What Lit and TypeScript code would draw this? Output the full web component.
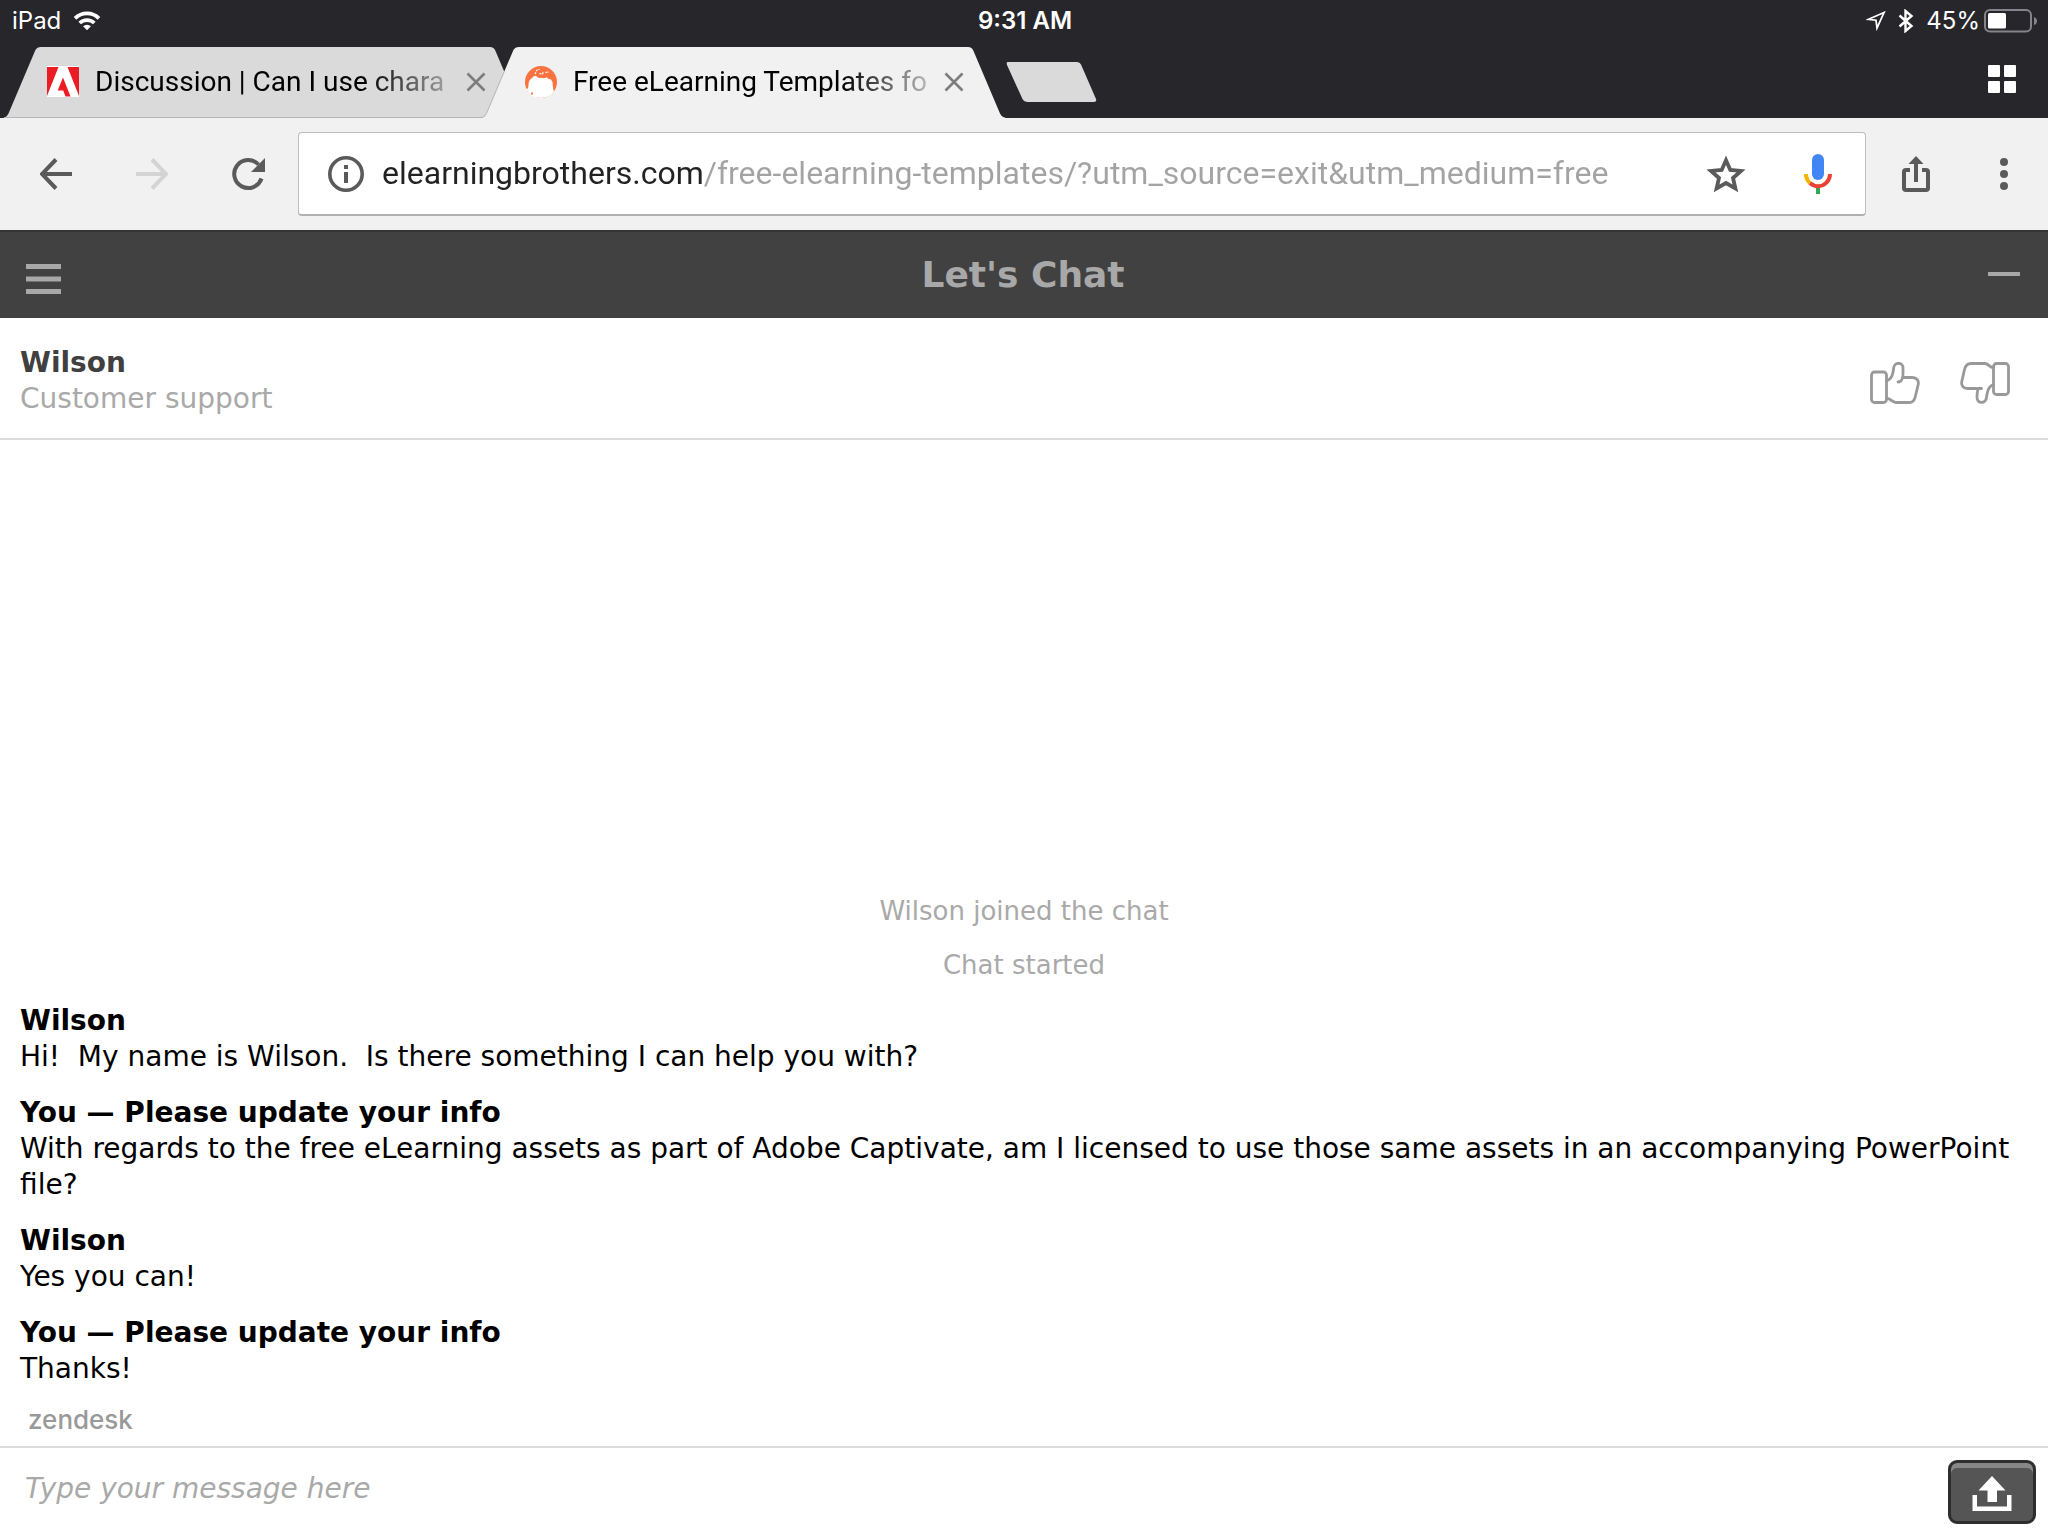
import { LitElement, html, css, svg } from "lit";
import { customElement, property } from "lit/decorators.js";
import { classMap } from "lit/directives/class-map.js";

const wifiIcon = svg`<svg width="28" height="22" viewBox="0 0 30 22" aria-hidden="true">
  <g fill="none" stroke="#fff" stroke-width="4">
    <path d="M2.200 8.200a18 18 0 0 1 25.600 0"/>
    <path d="M7.200 13.200a11 11 0 0 1 15.600 0"/>
  </g>
  <path d="M15 21l-4.200-4.400a6 6 0 0 1 8.400 0z" fill="#fff"/></svg>`;

const locationIcon = svg`<svg width="20" height="20" viewBox="0 0 20 20" aria-hidden="true">
  <path d="M18 1.500L2.500 8.300l7.500.9 1 7.800z" fill="none" stroke="#fff" stroke-width="1.800" stroke-linejoin="miter"/></svg>`;

const bluetoothIcon = svg`<svg width="16" height="24" viewBox="0 0 16 24" aria-hidden="true">
  <path d="M1.500 6.500l12 10.500-6 5V2l6 5L1.500 17.500" fill="none" stroke="#fff" stroke-width="2.400"/></svg>`;

const batteryIcon = svg`<svg width="54" height="24" viewBox="0 0 54 24" aria-hidden="true">
  <rect x="1" y="1" width="46" height="21.500" rx="5" fill="none" stroke="#84848a" stroke-width="2"/>
  <rect x="4" y="4" width="18" height="15.500" rx="1.500" fill="#fff"/>
  <path d="M50 8q3 1 3 4t-3 4z" fill="#84848a"/></svg>`;

const adobeIcon = svg`<svg width="32" height="32" viewBox="0 0 32 32" aria-hidden="true">
  <rect width="32" height="31" fill="#fff"/>
  <path d="M0 1h11.500L0 30zM20.500 1H32v29zM16 11.500L23.500 30.500h-5l-2.300-6h-5.500z" fill="#ec1c24"/></svg>`;

const brothersIcon = svg`<svg width="32" height="32" viewBox="0 0 32 32" aria-hidden="true">
  <circle cx="16" cy="16" r="16" fill="#f97340"/>
  <path d="M1.500 23q2 0 2-4 0-5 3-6.500 1.500-2.500 4.500-2.800 2 3 5.500 2 2.500 1.200 5-.5 1.500 2 4.500 2.300 2 2 1.700 5.500.3 4 1.300 6.500Q24.500 32 16 32 5.500 32 1.500 23z" fill="#fff"/>
  <path d="M6 27.500h2" stroke="#f97340" stroke-width="2"/>
  <path d="M10 8l2-4 2.500-.8M14.500 7.500l3 .5 1-2.500M20.500 6.500l3.500-.5" fill="none" stroke="#fff" stroke-width="1.200" stroke-dasharray="2 1"/></svg>`;

const closeIcon = svg`<svg width="20" height="20" viewBox="0 0 20 20" aria-hidden="true">
  <path d="M1.500 1.500l17 17M18.500 1.500l-17 17" stroke="#7d7d7d" stroke-width="2.600" fill="none"/></svg>`;

const tabsIcon = svg`<svg width="28" height="28" viewBox="0 0 28 28" fill="#fff" aria-hidden="true">
  <rect width="12" height="12" rx="1"/><rect x="16" width="12" height="12" rx="1"/>
  <rect y="16" width="12" height="12" rx="1"/><rect x="16" y="16" width="12" height="12" rx="1"/></svg>`;

const backIcon = svg`<svg width="32" height="32" viewBox="0 0 32 32" aria-hidden="true">
  <path d="M16 1.500L2 16l14 14.500M2.500 16H32" fill="none" stroke="#5a5a5a" stroke-width="4"/></svg>`;

const forwardIcon = svg`<svg width="32" height="32" viewBox="0 0 32 32" aria-hidden="true">
  <path d="M16 1.500L30 16 16 30.500M29.500 16H0" fill="none" stroke="#d4d4d4" stroke-width="4"/></svg>`;

const reloadIcon = svg`<svg width="34" height="34" viewBox="0 0 34 34" aria-hidden="true">
  <path d="M29.500 21.500A14 14 0 1 1 26.500 7.500" fill="none" stroke="#5a5a5a" stroke-width="4"/>
  <path d="M33 1v14H19z" fill="#5a5a5a"/></svg>`;

const infoIcon = svg`<svg width="36" height="36" viewBox="0 0 36 36" aria-hidden="true">
  <circle cx="18" cy="18" r="16.200" fill="none" stroke="#5a5a5a" stroke-width="3.600"/>
  <path d="M16 9h4v4h-4zM16 16h4v11h-4z" fill="#5a5a5a"/></svg>`;

const starIcon = svg`<svg width="40" height="38" viewBox="0 0 40 38" aria-hidden="true">
  <path d="M20 5.200l4.300 9.700 10.700 1-8 7.100 2.400 10.500-9.400-5.500-9.400 5.500L13 23l-8-7.100 10.700-1z" fill="none" stroke="#5a5a5a" stroke-width="3.800"/></svg>`;

const micIcon = svg`<svg width="28" height="40" viewBox="0 0 28 40" aria-hidden="true">
  <rect x="8" y="0" width="12" height="26" rx="6" fill="#4285f4"/>
  <path d="M12 33h4v7h-4z" fill="#34a853"/>
  <path d="M2 20q0 5.500 4 9" fill="none" stroke="#f4b400" stroke-width="4"/>
  <path d="M6 29q3.500 3.200 8 3.200 5 0 8.500-3.700Q26 25 26 20" fill="none" stroke="#ea4335" stroke-width="4"/></svg>`;

const shareIcon = svg`<svg width="28" height="36" viewBox="0 0 28 36" aria-hidden="true">
  <path d="M8 14H4q-2 0-2 2v16q0 2 2 2h20q2 0 2-2V16q0-2-2-2h-4" fill="none" stroke="#5a5a5a" stroke-width="4"/>
  <path d="M14 0l7.500 8H16v18h-4V8H6.500z" fill="#5a5a5a"/></svg>`;

const moreIcon = svg`<svg width="8" height="32" viewBox="0 0 8 32" fill="#5a5a5a" aria-hidden="true">
  <circle cx="4" cy="4" r="4"/><circle cx="4" cy="16" r="4"/><circle cx="4" cy="28" r="4"/></svg>`;

const menuIcon = svg`<svg width="35" height="30" viewBox="0 0 35 30" fill="#a8a8a8" aria-hidden="true">
  <rect width="35" height="5"/><rect y="12.500" width="35" height="5"/><rect y="25" width="35" height="5"/></svg>`;

const minimizeIcon = svg`<svg width="32" height="4" viewBox="0 0 32 4" aria-hidden="true"><rect width="32" height="4" fill="#a8a8a8"/></svg>`;

const thumbUpIcon = svg`<svg width="50" height="42" viewBox="0 0 50 42" aria-hidden="true">
  <g fill="none" stroke="#999" stroke-width="2.800" stroke-linecap="round" stroke-linejoin="round">
    <rect x="1.500" y="10" width="15" height="30.500" rx="3"/>
    <path d="M16.500 19c6-2 6.500-8 7.200-13 .5-6.300 9.300-6.300 9.300 0v6c0 4-1.500 8-5 8"/>
    <path d="M33 15.500h9.500c4.500 0 6.500 3.500 5.700 7l-3 12.500c-.8 3.500-3 5.500-6 5.500H26c-4 0-5.500-4.500-9.500-4"/>
  </g></svg>`;

const thumbDownIcon = svg`<svg width="50" height="42" viewBox="0 0 50 42" aria-hidden="true">
  <g fill="none" stroke="#999" stroke-width="2.800" stroke-linecap="round" stroke-linejoin="round">
    <rect x="33.500" y="1.500" width="15" height="31" rx="3"/>
    <path d="M33.500 22.500c-5.500 2-6.300 7.500-7 13-.6 6.500-9.500 6.500-9.500 0 0-3 .3-6 1-9"/>
    <path d="M21.500 26.500H7.500c-4.500 0-6.500-3.500-5.700-7L4.500 7.500C5.500 3.500 7.500 1.500 11 1.500h14c3.500 0 5 4.500 8.500 4"/>
  </g></svg>`;

const uploadIcon = svg`<svg width="40" height="36" viewBox="0 0 40 36" fill="#fff" aria-hidden="true">
  <path d="M20 0l13.500 14.500H25V26h-9.500V14.500h-9z"/>
  <path d="M.500 19H5v11.500h30V19h4.500v16H.500z"/></svg>`;

@customElement("browser-tab")
class BrowserTab extends LitElement {
  @property() label = "";
  @property({ attribute: false }) icon: unknown = null;
  @property({ type: Boolean, reflect: true }) active = false;

  static styles = css`
    :host {
      position: relative;
      display: block;
      width: 524px;
      height: 71px;
    }
    .shape {
      position: absolute;
      inset: 0;
      fill: #dadada;
    }
    .shape.active {
      fill: #f1f1f1;
    }
    .edge {
      fill: none;
      stroke: #b5b5b5;
      stroke-width: 1;
    }
    .content {
      position: relative;
      display: flex;
      align-items: center;
      height: 70px;
      padding: 0 42px 0 43px;
    }
    button {
      border: 0;
      padding: 0;
      background: none;
      display: flex;
      align-items: center;
    }
    .title {
      flex: 1;
      min-width: 0;
      gap: 16px;
      font: 28px/36px Roboto, "Liberation Sans", sans-serif;
      color: #000;
      text-align: left;
    }
    .text {
      flex: 1;
      overflow: hidden;
      white-space: nowrap;
      -webkit-mask-image: linear-gradient(to right, #000 270px, transparent 380px);
      mask-image: linear-gradient(to right, #000 270px, transparent 380px);
    }
    svg {
      display: block;
    }
  `;

  render() {
    return html`
      <svg class=${classMap({ shape: true, active: this.active })} width="524" height="71" viewBox="0 0 524 71" aria-hidden="true">
        <path d="M0 71Q3 70 4.500 66.500L31 4Q32.500 0 37 0H486Q490 0 491.500 4L518 66.500Q519.500 70 524 71z" />
        <path class="edge" d=${this.active ? "M0 70.500Q3 70 4.500 66.500L22 25" : "M0 70.500H480"} />
      </svg>
      <div class="content">
        <button class="title" role="tab" aria-selected=${this.active ? "true" : "false"}>
          ${this.icon}<span class="text">${this.label}</span>
        </button>
        <button class="close" aria-label="Close tab">${closeIcon}</button>
      </div>
    `;
  }
}

type Message = { author: string; text: string };

@customElement("app-root")
class AppRoot extends LitElement {
  private notices = ["Wilson joined the chat", "Chat started"];
  private messages: Message[] = [
    { author: "Wilson", text: "Hi!\u00a0 My name is Wilson.\u00a0 Is there something I can help you with?" },
    {
      author: "You — Please update your info",
      text: "With regards to the free eLearning assets as part of Adobe Captivate, am I licensed to use those same assets in an accompanying PowerPoint file?",
    },
    { author: "Wilson", text: "Yes you can!" },
    { author: "You — Please update your info", text: "Thanks!" },
  ];

  static styles = css`
    :host {
      display: flex;
      flex-direction: column;
      min-height: 100vh;
      background: #fff;
      font: 28px/36px Verdana, "DejaVu Sans", sans-serif;
      color: #000;
    }
    * {
      box-sizing: border-box;
    }
    svg {
      display: block;
    }
    button {
      border: 0;
      padding: 0;
      background: none;
      display: flex;
      align-items: center;
      justify-content: center;
    }
    .status {
      display: grid;
      grid-template-columns: 1fr auto 1fr;
      align-items: center;
      height: 47px;
      padding: 0 10px 6px 12px;
      background: #27262b;
      color: #fff;
      font: 24px/30px Inter, "Liberation Sans", sans-serif;
    }
    .carrier,
    .indicators {
      display: flex;
      align-items: center;
      gap: 12px;
    }
    .indicators {
      justify-content: flex-end;
    }
    .charge {
      display: flex;
      align-items: center;
      gap: 4px;
    }
    .time {
      font-weight: 600;
    }
    .strip {
      display: flex;
      height: 71px;
      padding: 0 32px 0 4px;
      background: #27262b;
    }
    .tabs {
      display: flex;
    }
    .tabs browser-tab + browser-tab {
      margin-left: -46px;
    }
    .new-tab {
      width: 91px;
      height: 40px;
      margin: 15px auto 0 0;
    }
    .switcher {
      height: 64px;
    }
    .toolbar {
      display: flex;
      align-items: center;
      height: 112px;
      padding: 0 40px;
      background: #f1f1f1;
    }
    .nav {
      display: flex;
      gap: 64px;
      margin-right: 32px;
    }
    .omnibox {
      flex: 1;
      min-width: 0;
      display: flex;
      align-items: center;
      height: 84px;
      padding: 0 33px 0 29px;
      border: 1px solid #bdbdbd;
      border-bottom: 2px solid #b0b0b0;
      border-radius: 4px;
      background: #fff;
    }
    .address {
      flex: 1;
      min-width: 0;
      margin: 0 24px 0 18px;
      padding: 0 0 2px;
      border: 0;
      outline: 0;
      font: 32px/44px Roboto, "Liberation Sans", sans-serif;
      color: transparent;
      background: linear-gradient(to right, #222 321px, #a3a3a3 321px);
      -webkit-background-clip: text;
      background-clip: text;
    }
    .mic {
      margin-left: 58px;
    }
    .share {
      margin: 0 70px 0 36px;
    }
    .chat-head {
      display: grid;
      grid-template-columns: 1fr auto 1fr;
      align-items: center;
      height: 88px;
      padding: 0 28px 0 26px;
      background: #414141;
      border-top: 2px solid #343434;
    }
    .chat-head h1 {
      margin: 0;
      font-size: 36px;
      line-height: 44px;
      color: #a8a8a8;
    }
    .menu {
      justify-self: start;
      padding-top: 8px;
    }
    .minimize {
      justify-self: end;
      height: 44px;
      padding-bottom: 2px;
    }
    .agent {
      display: flex;
      align-items: center;
      justify-content: space-between;
      height: 122px;
      padding: 6px 38px 0 20px;
      border-bottom: 2px solid #dcdcdc;
    }
    .agent h2 {
      margin: 0;
      font-size: 28px;
      line-height: 36px;
      color: #404040;
    }
    .agent p {
      margin: 0;
      color: #a9a9a9;
    }
    .rating {
      display: flex;
      gap: 40px;
      padding-top: 4px;
    }
    .log {
      flex: 1;
      display: flex;
      flex-direction: column;
      justify-content: flex-end;
      gap: 20px;
      padding: 20px 20px 0;
    }
    .notices {
      display: flex;
      flex-direction: column;
      align-items: center;
      gap: 18px;
      font-size: 26px;
      color: #a9a9a9;
    }
    .notices p,
    .message p,
    .message h3 {
      margin: 0;
    }
    .message h3 {
      font-size: 28px;
      line-height: 36px;
    }
    .brand {
      display: flex;
      align-items: center;
      height: 59px;
      padding: 6px 28px 0;
    }
    .brand a {
      color: #999;
      font: 500 26px/36px Inter, sans-serif;
      text-decoration: none;
    }
    .composer {
      display: flex;
      align-items: center;
      height: 90px;
      padding: 0 12px 0 25px;
      border-top: 2px solid #dcdcdc;
    }
    .composer input {
      flex: 1;
      min-width: 0;
      padding: 0 0 6px;
      border: 0;
      outline: 0;
      background: none;
      font: inherit;
      color: #000;
    }
    .composer input::placeholder {
      color: #a9a9a9;
      font-style: italic;
      opacity: 1;
    }
    .upload {
      width: 88px;
      height: 64px;
      border: 3px solid #2e2e2e;
      border-radius: 9px;
      background: #555;
      box-shadow: inset 0 5px 0 #878787;
      padding-top: 4px;
    }
  `;

  render() {
    return html`
      <div class="status">
        <div class="carrier"><span>iPad</span>${wifiIcon}</div>
        <span class="time">9:31 AM</span>
        <div class="indicators">
          ${locationIcon}${bluetoothIcon}
          <div class="charge"><span>45%</span>${batteryIcon}</div>
        </div>
      </div>
      <div class="strip">
        <div class="tabs" role="tablist">
          <browser-tab label="Discussion | Can I use chara" .icon=${adobeIcon}></browser-tab>
          <browser-tab label="Free eLearning Templates fo" .icon=${brothersIcon} active></browser-tab>
        </div>
        <button class="new-tab" aria-label="New tab">
          <svg width="91" height="40" viewBox="0 0 91 40" aria-hidden="true">
            <path d="M2 0H71Q74 0 75 2.500L90 37Q91 40 88 40H22Q18 40 16.500 37L1 3Q0 0 2 0z" fill="#dadada" />
          </svg>
        </button>
        <button class="switcher" aria-label="Show tabs">${tabsIcon}</button>
      </div>
      <div class="toolbar">
        <div class="nav">
          <button aria-label="Back">${backIcon}</button>
          <button aria-label="Forward" disabled>${forwardIcon}</button>
          <button aria-label="Reload">${reloadIcon}</button>
        </div>
        <div class="omnibox">
          <button aria-label="Site information">${infoIcon}</button>
          <input
            class="address"
            type="text"
            aria-label="Address"
            value="elearningbrothers.com/free-elearning-templates/?utm_source=exit&amp;utm_medium=free"
          />
          <button aria-label="Bookmark">${starIcon}</button>
          <button class="mic" aria-label="Voice search">${micIcon}</button>
        </div>
        <button class="share" aria-label="Share">${shareIcon}</button>
        <button aria-label="More">${moreIcon}</button>
      </div>
      <header class="chat-head">
        <button class="menu" aria-label="Menu">${menuIcon}</button>
        <h1>Let's Chat</h1>
        <button class="minimize" aria-label="Minimize">${minimizeIcon}</button>
      </header>
      <section class="agent">
        <div>
          <h2>Wilson</h2>
          <p>Customer support</p>
        </div>
        <div class="rating">
          <button aria-label="Rate good">${thumbUpIcon}</button>
          <button aria-label="Rate bad">${thumbDownIcon}</button>
        </div>
      </section>
      <main class="log">
        <div class="notices">${this.notices.map((n) => html`<p>${n}</p>`)}</div>
        ${this.messages.map(
          (m) => html`<article class="message">
            <h3>${m.author}</h3>
            <p>${m.text}</p>
          </article>`,
        )}
      </main>
      <div class="brand"><a href="#">zendesk</a></div>
      <form class="composer">
        <input type="text" aria-label="Message" placeholder="Type your message here" />
        <button class="upload" type="button" aria-label="Send file">${uploadIcon}</button>
      </form>
    `;
  }
}
